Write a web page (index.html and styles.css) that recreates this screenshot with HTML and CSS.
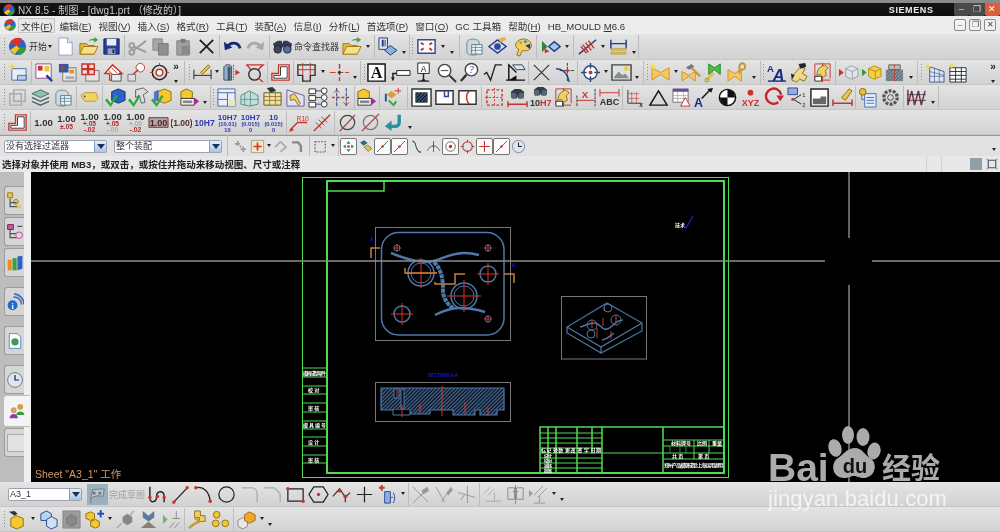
FILE: index.html
```html
<!DOCTYPE html>
<html lang="zh">
<head>
<meta charset="utf-8">
<title>NX 8.5 - 制图</title>
<link rel="stylesheet" href="styles.css">
</head>
<body>
<svg class="defs" xmlns="http://www.w3.org/2000/svg">
<defs>
<pattern id="hatch" width="2.6" height="2.6" patternUnits="userSpaceOnUse" patternTransform="rotate(45)"><rect width="2.6" height="2.6" fill="#101a28"/><rect width="1" height="2.6" fill="#4a6f9a"/></pattern>
<symbol id="start" viewBox="0 0 22 22"><circle cx="11" cy="11" r="9" fill="#2a62c8"/><path d="M3 8a9 9 0 0 1 13-5l-4 7z" fill="#d8322a"/><path d="M11 20a9 9 0 0 0 9-8h-8z" fill="#3a9a3a"/><path d="M3 15l7-5 3 3-5 6z" fill="#f5c518"/></symbol>
<symbol id="new" viewBox="0 0 22 22"><path d="M4 2h9l5 5v13H4z" fill="#fff" stroke="#8ea4cc"/><path d="M13 2v5h5" fill="#dfe6f3" stroke="#8ea4cc"/></symbol>
<symbol id="open" viewBox="0 0 22 22"><path d="M2 8h7l2 2h6v9H2z" fill="#e5b93a" stroke="#a07c18"/><path d="M2 19l4-8h15l-4 8z" fill="#f7e08a" stroke="#a07c18"/><path d="M11 6a5 4 0 0 1 6-3V1l4 3-4 3V5a4 3 0 0 0-6 1z" fill="#3fa43f"/></symbol>
<symbol id="save" viewBox="0 0 22 22"><path d="M3 3h16v16H3z" fill="#24409a" stroke="#16265e"/><path d="M6 3h10v7H6z" fill="#e8edf8"/><path d="M7 13h8v6H7z" fill="#9aa5c0"/><path d="M12 14h2v4h-2z" fill="#16265e"/></symbol>
<symbol id="cut" viewBox="0 0 22 22"><g fill="none" stroke="#9a9a9a" stroke-width="2"><circle cx="5" cy="17" r="2.5"/><circle cx="5" cy="10" r="2.5"/><path d="M7 15L20 5M7 11l13 6"/></g></symbol>
<symbol id="copy" viewBox="0 0 22 22"><path d="M3 3h10v12H3z" fill="#a6a6a6" stroke="#8a8a8a"/><path d="M9 8h10v12H9z" fill="#8f8f8f" stroke="#777"/></symbol>
<symbol id="paste" viewBox="0 0 22 22"><path d="M4 5h13v15H4z" fill="#a0a0a0" stroke="#808080"/><path d="M8 3h5v4H8z" fill="#777"/><path d="M9 10h9v9H9z" fill="#8a8a8a"/></symbol>
<symbol id="x" viewBox="0 0 22 22"><path d="M4 4l14 14M18 4L4 18" stroke="#222" stroke-width="2"/></symbol>
<symbol id="undo" viewBox="0 0 22 22"><path d="M6 11c3-5 11-5 13 2" fill="none" stroke="#132a7a" stroke-width="3"/><path d="M2 6l1 9 8-3z" fill="#132a7a"/></symbol>
<symbol id="redo" viewBox="0 0 22 22"><path d="M16 11c-3-5-11-5-13 2" fill="none" stroke="#a8a8a8" stroke-width="3"/><path d="M20 6l-1 9-8-3z" fill="#a8a8a8"/></symbol>
<symbol id="binoc" viewBox="0 0 22 22"><path d="M1 8l5-3h4l1 3 1-3h4l5 3-1 5h-7l-1-2-2 2H3z" fill="#333c4c"/><circle cx="6" cy="14" r="4" fill="#445" stroke="#223"/><circle cx="16" cy="14" r="4" fill="#5570a8" stroke="#223"/></symbol>
<symbol id="lay" viewBox="0 0 22 22"><path d="M2 2h9v12H2z" fill="#dfe6f3" stroke="#223a7a"/><path d="M5 4h2v7H5zM8 4h1v7H8z" fill="#223a7a"/><path d="M8 15l6-5 7 5-7 5z" fill="#8fb0de" stroke="#223a7a"/></symbol>
<symbol id="fit" viewBox="0 0 22 22"><path d="M2 4h18v14H2z" fill="#fff" stroke="#2a4a9a" stroke-width="1.5"/><path d="M5 7l3 2M17 7l-3 2M5 15l3-2M17 15l-3-2" stroke="#c8342c" stroke-width="2"/></symbol>
<symbol id="dbg" viewBox="0 0 22 22"><path d="M3 7c0-5 13-5 13 0v10c0 4-13 4-13 0z" fill="#cfd8dc" stroke="#6a8a9a"/><path d="M8 9h11v10H8z" fill="#eef3f5" stroke="#5a7f95"/><path d="M8 12h11M8 15h11M12 9v10" stroke="#5a7f95" stroke-width=".8"/></symbol>
<symbol id="eyed" viewBox="0 0 22 22"><path d="M2 11l9-7 9 7-9 7z" fill="#d8e2f5" stroke="#223a8a" stroke-width="1.5"/><circle cx="11" cy="11" r="3.5" fill="#2a4a9a"/><path d="M12 3l7-2 1 3-6 3z" fill="#e8b04a"/></symbol>
<symbol id="pal" viewBox="0 0 22 22"><path d="M3 8c3-7 14-6 16 0 2 6-6 9-9 7l-3 6-3-1 2-6c-2-1-4-3-3-6z" fill="#f0d060" stroke="#8a7020"/><circle cx="8" cy="7" r="1.5" fill="#d83"/><circle cx="13" cy="6" r="1.5" fill="#38c"/><path d="M13 10l5-2v6z" fill="#223a8a"/></symbol>
<symbol id="tri" viewBox="0 0 22 22"><path d="M2 5v12l6-6z" fill="#2a8a3a"/><path d="M5 13v5l5-2z" fill="#c8342c"/><path d="M9 11l6-5 6 5-6 5z" fill="#a8c4ea" stroke="#223a8a" stroke-width="1.5"/></symbol>
<symbol id="hatchd" viewBox="0 0 22 22"><path d="M2 19L20 4" stroke="#223a8a" stroke-width="1.5"/><path d="M6 9l6 8M9 7l6 8M12 5l6 8M4 11l6 7" stroke="#c8342c" stroke-width="1.5"/></symbol>
<symbol id="dimbar" viewBox="0 0 22 22"><path d="M3 4v9M19 4v9M3 8h16" stroke="#223a8a" stroke-width="1.5" fill="none"/><path d="M3 13h16v2H3zM3 17h16v2H3z" fill="#e0c040" stroke="#a89020" stroke-width=".5"/></symbol>
<symbol id="nsheet" viewBox="0 0 22 22"><path d="M5 7h15v12H5z" fill="#e4eefa" stroke="#4a6fa8"/><path d="M11 14h9v5h-9z" fill="#b8cce8" stroke="#4a6fa8"/><path d="M5 1l1 3 3 1-3 1-1 3-1-3-3-1 3-1z" fill="#f5d83a"/></symbol>
<symbol id="vmag" viewBox="0 0 22 22"><path d="M2 2h16v15H2z" fill="#fff" stroke="#8a4a9a"/><path d="M4 4h5v5H4z" fill="#c8342c"/><path d="M11 4h5v6h-5z" fill="#e8c840"/><path d="M13 14l6 6" stroke="#223a8a" stroke-width="2.5"/></symbol>
<symbol id="views" viewBox="0 0 22 22"><path d="M6 6h14v14H6z" fill="#e8e8e8" stroke="#777"/><path d="M2 2h10v9H2z" fill="#2a5ab0"/><path d="M4 4h4v4H4z" fill="#c8342c"/><path d="M13 8h5v4h-5z" fill="#e89020"/><path d="M9 15h9v3H9z" fill="#aaa"/></symbol>
<symbol id="grid3" viewBox="0 0 22 22"><path d="M6 9h14v11H6z" fill="#e4e4e4" stroke="#777"/><g fill="#f4dcdc" stroke="#c8342c" stroke-width="1.5"><path d="M2 2h6v5H2zM9 2h6v5H9zM2 8h6v5H2zM9 8h6v5H9z"/></g></symbol>
<symbol id="cubr" viewBox="0 0 22 22"><path d="M2 12l8-9 10 9-3 0v7H7v-7z" fill="#fff" stroke="#c8342c" stroke-width="1.5"/><path d="M6 9l6 6M9 6l6 6" stroke="#c8342c"/><path d="M9 13h10v7H9z" fill="#e8e8e8" stroke="#555"/></symbol>
<symbol id="link" viewBox="0 0 22 22"><circle cx="15" cy="6" r="4.5" fill="#fff" stroke="#c8342c"/><path d="M4 16l9-8" stroke="#c8342c" stroke-width="1.5"/><path d="M2 13h8v7H2z" fill="#ddd" stroke="#777"/></symbol>
<symbol id="tgt" viewBox="0 0 22 22"><circle cx="11" cy="11" r="7.5" fill="none" stroke="#222" stroke-width="1.5"/><circle cx="11" cy="11" r="3.5" fill="#fff" stroke="#c8342c" stroke-width="1.5"/><path d="M1 11h3M18 11h3M11 1v3" stroke="#c8342c"/></symbol>
<symbol id="dimt" viewBox="0 0 22 22"><path d="M2 8v10M20 8v10M2 14h18" stroke="#222" fill="none"/><path d="M9 11l8-8 2 2-8 8z" fill="#e8c840" stroke="#8a7020"/></symbol>
<symbol id="mir" viewBox="0 0 22 22"><path d="M3 5c3-4 8-2 8 0v14H3z" fill="#8fb0c8" stroke="#456"/><path d="M7 5h3v14H7z" fill="#456"/><path d="M13 3v16" stroke="#c8342c" stroke-dasharray="2 1"/><path d="M15 8l5 3-5 3z" fill="#c8342c"/></symbol>
<symbol id="ring" viewBox="0 0 22 22"><path d="M2 3l18 0-6 6M8 9L3 3" fill="none" stroke="#c8342c" stroke-width="1.5"/><circle cx="11" cy="13" r="6" fill="none" stroke="#333" stroke-width="1.5"/><path d="M15 17l5 4" stroke="#c8342c" stroke-width="1.5"/></symbol>
<symbol id="step" viewBox="0 0 22 22"><path d="M9 3h11v16H2v-7h7z" fill="#fff" stroke="#c8342c" stroke-width="1.5"/><path d="M11 5h7v12H4v-3h7z" fill="none" stroke="#333"/></symbol>
<symbol id="steps" viewBox="0 0 22 22"><path d="M2 3h18v11h-5v6H7v-6H2z" fill="none" stroke="#333" stroke-width="1.5"/><path d="M7 1v12M15 1v12M2 8h18" stroke="#c8342c"/></symbol>
<symbol id="crs" viewBox="0 0 22 22"><path d="M1 11h20" stroke="#c8342c" stroke-dasharray="6 2"/><path d="M11 2v18" stroke="#c8342c" stroke-width="1.5" stroke-dasharray="5 2"/><circle cx="11" cy="11" r="1.5" fill="#333"/></symbol>
<symbol id="abox" viewBox="0 0 22 22"><path d="M1 2h18v18H1z" fill="#fff" stroke="#111" stroke-width="1.5"/><text x="10" y="17" text-anchor="middle" font-family="Liberation Serif" font-weight="700" font-size="17" fill="#111">A</text></symbol>
<symbol id="flag" viewBox="0 0 22 22"><path d="M7 9h14v5H7z" fill="#fff" stroke="#222"/><path d="M7 12H3v7" fill="none" stroke="#222" stroke-width="1.5"/><path d="M1 16l2 4 2-4z" fill="#222"/></symbol>
<symbol id="anno" viewBox="0 0 22 22"><path d="M5 1h12v11H5z" fill="#fff" stroke="#222"/><text x="11" y="10" text-anchor="middle" font-family="Liberation Sans" font-size="9" fill="#222">A</text><path d="M11 12v6M5 20h12" stroke="#222" stroke-width="1.5"/><path d="M8 20l3-3 3 3z" fill="#222"/></symbol>
<symbol id="mag" viewBox="0 0 22 22"><circle cx="9" cy="9" r="6.5" fill="#fff" stroke="#444" stroke-width="1.5"/><path d="M5 9h8" stroke="#444"/><path d="M14 14l7 7" stroke="#333" stroke-width="2"/></symbol>
<symbol id="magq" viewBox="0 0 22 22"><circle cx="13" cy="8" r="6.5" fill="#fff" stroke="#444" stroke-width="1.5"/><text x="13" y="12" text-anchor="middle" font-family="Liberation Serif" font-style="italic" font-size="10" fill="#223a8a">?</text><path d="M8 13l-6 7" stroke="#333" stroke-width="2.5"/></symbol>
<symbol id="sqrt" viewBox="0 0 22 22"><path d="M2 13l3-2 4 8 5-16h7" fill="none" stroke="#222" stroke-width="1.5"/></symbol>
<symbol id="weld" viewBox="0 0 22 22"><path d="M1 19h20M4 19V3l8 8" fill="none" stroke="#111" stroke-width="1.5"/><path d="M4 19l8-5v5z" fill="#111"/><path d="M8 3h10l3 5H12z" fill="#dfe6f3" stroke="#345"/></symbol>
<symbol id="xx" viewBox="0 0 22 22"><path d="M3 3l16 16M19 3L3 19" stroke="#333" stroke-width="1.2"/></symbol>
<symbol id="cvx" viewBox="0 0 22 22"><path d="M2 7c7 0 12 5 14 14" fill="none" stroke="#2a4a9a" stroke-width="1.5"/><path d="M14 1v20M6 9h16" stroke="#333" stroke-dasharray="3 1"/><circle cx="14" cy="9" r="1.5" fill="#c8342c"/></symbol>
<symbol id="chr" viewBox="0 0 22 22"><circle cx="11" cy="11" r="7" fill="#fff" stroke="#2a4a7a" stroke-width="1.5"/><circle cx="11" cy="11" r="2" fill="#c8342c"/><path d="M1 11h6M15 11h6M11 1v6M11 15v6" stroke="#2a4a7a" stroke-width="1.5"/></symbol>
<symbol id="pic" viewBox="0 0 22 22"><path d="M1 3h20v16H1z" fill="#dde2e6" stroke="#444" stroke-width="1.5"/><path d="M3 16l5-6 4 4 3-2 4 5H3z" fill="#8a9088"/><circle cx="16" cy="7" r="2.5" fill="#f0d040"/></symbol>
<symbol id="bow" viewBox="0 0 22 22"><path d="M2 6l9 5 9-5v13l-9-6-9 6z" fill="#f5c860" stroke="#d89020"/><path d="M3 1l1 3 3 1-3 1-1 3-1-3-3-1 3-1z" fill="#f5e040"/></symbol>
<symbol id="bowh" viewBox="0 0 22 22"><path d="M1 10l7 4 7-4v10l-7-5-7 5z" fill="#f5c860" stroke="#d89020"/><path d="M5 6l6-4 3 3-5 3z" fill="#777"/><path d="M11 6l9 9" stroke="#c89848" stroke-width="2.5"/></symbol>
<symbol id="bowg" viewBox="0 0 22 22"><path d="M5 2l6 4 6-4v11l-6-5-6 5z" fill="#48c048" stroke="#208820"/><path d="M10 11l-7 8" stroke="#e0c040" stroke-width="3"/><circle cx="3" cy="19" r="2" fill="none" stroke="#a89020"/></symbol>
<symbol id="bowk" viewBox="0 0 22 22"><path d="M1 8l7 4 7-4v12l-7-5-7 5z" fill="#f5c860" stroke="#d89020"/><path d="M13 12V5c0-5 6-5 6 0 0 3-4 4-6 2" fill="none" stroke="#c89838" stroke-width="2"/></symbol>
<symbol id="aa" viewBox="0 0 22 22"><text x="1" y="10" font-family="Liberation Sans" font-weight="700" font-size="10" fill="#1a2a8a">A</text><text x="7" y="20" font-family="Liberation Sans" font-weight="700" font-size="17" font-style="italic" fill="#1a2a8a">A</text><path d="M2 20h19" stroke="#1a2a8a" stroke-width="1.5"/></symbol>
<symbol id="wren" viewBox="0 0 22 22"><path d="M4 14l8-9 5 2-3 5 5 3-3 5-5-2-3 3-5-2z" fill="#f0d888" stroke="#8a7020"/><path d="M10 2l7-1 1 4-6 2zM2 12l4 2-3 4z" fill="#223"/></symbol>
<symbol id="fry" viewBox="0 0 22 22"><path d="M3 2h16M3 2v17M19 2v15M3 19h16M11 1v20" stroke="#c8342c" fill="none"/><path d="M8 6l5-3 4 3-3 3 1 5-4 2-2-3-4 1 1-5z" fill="#f0d060" stroke="#8a7020"/><path d="M3 15h7v5H3z" fill="#fff" stroke="#333"/></symbol>
<symbol id="cgr" viewBox="0 0 22 22"><path d="M1 7v8l5-4z" fill="#c8342c"/><path d="M8 7l6-3 7 3v8l-7 3-6-3z" fill="#dfe6ea" stroke="#99a"/><path d="M8 7l7 3 6-3M15 10v8" stroke="#99a" fill="none"/></symbol>
<symbol id="cyl" viewBox="0 0 22 22"><path d="M1 7v8l5-4z" fill="#30a030"/><path d="M8 7l6-3 7 3v8l-7 3-6-3z" fill="#f5d040" stroke="#b09018"/><path d="M8 7l7 3 6-3M15 10v8" stroke="#b09018" fill="none"/></symbol>
<symbol id="hatt" viewBox="0 0 22 22"><path d="M5 3h12v5H5z" fill="#bbb" stroke="#665"/><path d="M2 8h18v12H2z" fill="url(#hatch)" opacity=".55"/><path d="M11 3v17" stroke="#c8342c" stroke-dasharray="3 1"/></symbol>
<symbol id="stg" viewBox="0 0 22 22"><path d="M6 5l15 5v11H6z" fill="#dfe6f3" stroke="#4a5a8a"/><path d="M6 10l15 4M6 15h15M11 6v15M16 8v13" stroke="#4a5a8a" stroke-width=".7"/><path d="M4 1l1 3 3 1-3 1-1 3-1-3-3-1 3-1z" fill="#f5d83a"/></symbol>
<symbol id="stt" viewBox="0 0 22 22"><path d="M3 6h17v15H3z" fill="#fff" stroke="#234"/><path d="M3 10h17M3 14h17M3 18h17M9 6v15M15 6v15" stroke="#234"/><path d="M5 0l1 3 3 1-3 1-1 3-1-3-3-1 3-1z" fill="#f5d83a"/></symbol>
<symbol id="gbox" viewBox="0 0 22 22"><path d="M3 7h12v12H3zM7 3h12v12H7z" fill="none" stroke="#aaa" stroke-width="1.5"/></symbol>
<symbol id="stk" viewBox="0 0 22 22"><path d="M2 7l9-4 9 4-9 4z" fill="#8cc0b0" stroke="#4a6a6a"/><path d="M2 11l9 4 9-4M2 15l9 4 9-4" fill="none" stroke="#4a6a6a" stroke-width="1.5"/></symbol>
<symbol id="tag" viewBox="0 0 22 22"><path d="M2 9l4-3h12l2 6-3 3H6z" fill="#f0d468" stroke="#b89a38"/><circle cx="6" cy="10" r="1" fill="#555"/></symbol>
<symbol id="cblue" viewBox="0 0 22 22"><path d="M7 5l7-3 7 3v9l-7 3-7-3z" fill="#2a62c8" stroke="#16306a"/><path d="M2 12l4 5 5-9 2 2-7 11-6-7z" fill="#2fa83f"/></symbol>
<symbol id="hamc" viewBox="0 0 22 22"><path d="M8 3l8-2 5 4-5 3 2 8-4 1-2-8-4 2z" fill="#ddd" stroke="#566"/><path d="M2 12l4 5 5-9 2 2-7 11-6-7z" fill="#2fa83f"/></symbol>
<symbol id="cyc" viewBox="0 0 22 22"><path d="M7 5l7-3 7 3v9l-7 3-7-3z" fill="#f5c830" stroke="#907010"/><path d="M3 5l5-2v11l-5 2z" fill="#2a62c8" opacity=".8"/><path d="M2 12l4 5 5-9 2 2-7 11-6-7z" fill="#2fa83f"/></symbol>
<symbol id="dmc" viewBox="0 0 22 22"><path d="M2 5l6-3 6 3v6l-6 3-6-3z" fill="#f5c830" stroke="#907010"/><path d="M2 12h14v7H2z" fill="#fff" stroke="#333"/><path d="M4 14h10v3H4z" fill="#888"/><path d="M16 11l5 4-5 4z" fill="#b020a0"/></symbol>
<symbol id="win" viewBox="0 0 22 22"><path d="M2 2h18v18H2z" fill="#eef" stroke="#4a6a9a"/><path d="M2 6h18M12 6v14M2 13h10" stroke="#4a6a9a"/><path d="M13 13h7v7h-7z" fill="#e8e8c0"/></symbol>
<symbol id="dbm" viewBox="0 0 22 22"><path d="M2 9l9-5 9 5v9l-9 2-9-2z" fill="#bfe0d8" stroke="#5a8a8a"/><path d="M2 13h18M6 7v12M12 5v15" stroke="#5a8a8a" stroke-width=".8"/></symbol>
<symbol id="tby" viewBox="0 0 22 22"><path d="M2 6h18v13H2z" fill="#f4e290" stroke="#555"/><path d="M2 10h18M2 14h18M8 6v13M14 6v13" stroke="#7a6a30" stroke-width=".8"/><path d="M5 1l6-1 4 4-6 2z" fill="#333"/></symbol>
<symbol id="tl2" viewBox="0 0 22 22"><path d="M2 3l18 6v11H2z" fill="#dfe4f4" stroke="#6a5a9a"/><path d="M5 9l5-2 2 3 4 7-2 2-4-6-4 1z" fill="#f0d060" stroke="#8a7020"/></symbol>
<symbol id="tre" viewBox="0 0 22 22"><g fill="#fff" stroke="#333"><path d="M1 2h7v5H1zM1 9h7v5H1zM1 16h7v5H1z"/><circle cx="17" cy="4" r="3"/><circle cx="17" cy="11" r="3"/><circle cx="17" cy="18" r="3"/></g><path d="M8 4h6M8 11h6M8 18h6" stroke="#2a4a9a"/></symbol>
<symbol id="dts" viewBox="0 0 22 22"><path d="M6 1v20M16 1v20" stroke="#223a7a" stroke-dasharray="4 1"/><path d="M1 11h20" stroke="#c8342c" stroke-dasharray="3 2" stroke-width="1.5"/><path d="M3 6l3-3 3 3M13 16l3 3 3-3" fill="none" stroke="#c8342c"/></symbol>
<symbol id="axs" viewBox="0 0 22 22"><path d="M5 8l5-4 5 4-5 4z" fill="#d8a030"/><path d="M7 14l5 5 3-4" fill="none" stroke="#2fa83f" stroke-width="2"/><path d="M4 7v8" stroke="#2a4a9a" stroke-width="2"/><path d="M13 4h7M17 1v6" stroke="#c8342c"/></symbol>
<symbol id="hbx" viewBox="0 0 22 22"><path d="M1 2h20v18H1z" fill="#fff" stroke="#333" stroke-width="1.5"/><path d="M5 6h12v10H5z" fill="url(#hatch)" stroke="#444"/></symbol>
<symbol id="nc1" viewBox="0 0 22 22"><path d="M2 4h18v14H2z" fill="#fff" stroke="#333" stroke-width="1.5"/><path d="M11 4v6h4V4" fill="none" stroke="#2a4a9a" stroke-width="1.5"/></symbol>
<symbol id="nc2" viewBox="0 0 22 22"><path d="M2 4h18v14H2z" fill="#fff" stroke="#333" stroke-width="1.5"/><path d="M13 4c-4 3-4 10 0 14" fill="none" stroke="#c8342c" stroke-width="1.5"/></symbol>
<symbol id="rsq" viewBox="0 0 22 22"><path d="M3 3h16v16H3z" fill="none" stroke="#c8342c" stroke-width="1.5" stroke-dasharray="3 2"/><path d="M11 1v20M1 11h20" stroke="#c8342c" stroke-dasharray="2 2"/></symbol>
<symbol id="bnd" viewBox="0 0 22 22"><path d="M4 5l4-3h6l4 3-1 7h-5l-1-2-1 2H5z" fill="#333c4c"/><circle cx="7" cy="9" r="3" fill="#567"/><circle cx="15" cy="9" r="3" fill="#567"/><path d="M1 15v6M21 15v6M1 18h20" stroke="#c8342c" stroke-width="1.5"/></symbol>
<symbol id="b10" viewBox="0 0 22 22"><path d="M4 3l4-3h6l4 3-1 6h-5l-1-2-1 2H5z" fill="#333c4c"/><circle cx="7" cy="6" r="3" fill="#567"/><circle cx="15" cy="6" r="3" fill="#567"/><text x="0" y="20" font-family="Liberation Sans" font-weight="700" font-size="9.5" fill="#333">10<tspan fill="#c8342c">H7</tspan></text></symbol>
<symbol id="xd" viewBox="0 0 22 22"><path d="M1 9v11M20 2v18" stroke="#333" stroke-dasharray="3 1"/><path d="M1 14h19" stroke="#c8342c"/><text x="6" y="11" font-family="Liberation Sans" font-weight="700" font-size="10" fill="#c8342c">X</text></symbol>
<symbol id="abc" viewBox="0 0 22 22"><path d="M1 2v8M21 2v8M1 6h20" stroke="#c8342c"/><text x="11" y="19" text-anchor="middle" font-family="Liberation Sans" font-weight="700" font-size="9.5" fill="#333">ABC</text></symbol>
<symbol id="xya" viewBox="0 0 22 22"><path d="M3 3v14h14" fill="none" stroke="#333"/><path d="M3 7h12M3 12h12M7 5v12M12 5v12" stroke="#c8342c" stroke-width=".6"/><text x="15" y="21" font-family="Liberation Sans" font-weight="700" font-size="7" fill="#333">x</text></symbol>
<symbol id="tria" viewBox="0 0 22 22"><path d="M11 4l9 15H2z" fill="none" stroke="#111" stroke-width="1.5"/></symbol>
<symbol id="tbw" viewBox="0 0 22 22"><path d="M2 2h16v14H2z" fill="#fff" stroke="#777"/><path d="M2 2h16v3H2z" fill="#6a4aa8"/><path d="M2 9h16M2 12h16M7 5v11M13 5v11" stroke="#999" stroke-width=".7"/><path d="M15 11l5 9H10z" fill="#fff" stroke="#c8342c"/></symbol>
<symbol id="aar" viewBox="0 0 22 22"><text x="0" y="21" font-family="Liberation Sans" font-weight="700" font-size="13" fill="#1a2a8a">A</text><path d="M8 12l9-9" stroke="#111" stroke-width="1.5"/><path d="M20 1l-6 1 4 4z" fill="#111"/></symbol>
<symbol id="ball" viewBox="0 0 22 22"><circle cx="11" cy="11" r="8.5" fill="#fff" stroke="#111" stroke-width="1.5"/><path d="M11 3a8 8 0 0 1 8 8h-8zM11 19a8 8 0 0 1-8-8h8z" fill="#111"/></symbol>
<symbol id="xyz" viewBox="0 0 22 22"><circle cx="11" cy="6" r="3" fill="#c8342c"/><text x="11" y="20" text-anchor="middle" font-family="Liberation Sans" font-weight="700" font-size="9.5" fill="#c8342c">XYZ</text></symbol>
<symbol id="rrn" viewBox="0 0 22 22"><path d="M16 16a8 8 0 1 1 3-8" fill="none" stroke="#c8242c" stroke-width="2.5"/><path d="M14 9h8l-4 6z" fill="#c8242c"/></symbol>
<symbol id="t12" viewBox="0 0 22 22"><path d="M2 1h10v7H2z" fill="#9aa8e0" stroke="#334a9a"/><path d="M8 13l8-5M8 13l8 5" stroke="#222"/><circle cx="7" cy="13" r="1.5" fill="#c8342c"/><text x="17" y="10" font-family="Liberation Sans" font-size="6" fill="#222">1</text><text x="17" y="21" font-family="Liberation Sans" font-size="6" fill="#222">2</text></symbol>
<symbol id="blk" viewBox="0 0 22 22"><path d="M2 2h18v18H2z" fill="#fff" stroke="#222" stroke-width="1.5"/><path d="M4 12h8v-2h6v8H4z" fill="#666"/></symbol>
<symbol id="brs" viewBox="0 0 22 22"><path d="M10 11l8-9 3 2-7 10z" fill="#e8c840" stroke="#8a7020"/><path d="M1 13v7M21 13v7M1 17h20" stroke="#c8342c" stroke-width="1.5"/></symbol>
<symbol id="sch" viewBox="0 0 22 22"><path d="M8 7h12v14H8z" fill="#e4eefa" stroke="#4a6fa8"/><path d="M10 11h8M10 14h8M10 17h8" stroke="#4a6fa8"/><circle cx="6" cy="5" r="3.5" fill="#e8c040" stroke="#906a10"/><path d="M8 13H5v-5" fill="none" stroke="#4a6fa8"/></symbol>
<symbol id="gr" viewBox="0 0 22 22"><circle cx="11" cy="11" r="3" fill="none" stroke="#444"/><circle cx="11" cy="11" r="7" fill="none" stroke="#555" stroke-width="3.5" stroke-dasharray="3 1.4"/></symbol>
<symbol id="zig" viewBox="0 0 22 22"><path d="M2 3v16l4-15 3 15 4-15 3 15 4-15" fill="none" stroke="#7a2a3a" stroke-width="1.5"/><path d="M1 8h20M1 14h20" stroke="#335" stroke-width=".8"/></symbol>
<symbol id="d100" viewBox="0 0 22 22"><text x="11" y="15" text-anchor="middle" font-family="Liberation Sans" font-weight="700" font-size="10" fill="#333">1.00</text></symbol>
<symbol id="d101" viewBox="0 0 22 22"><text x="11" y="10" text-anchor="middle" font-family="Liberation Sans" font-weight="700" font-size="10" fill="#333">1.00</text><text x="11" y="18" text-anchor="middle" font-family="Liberation Sans" font-weight="700" font-size="7" fill="#b02a2a">±.05</text></symbol>
<symbol id="d102" viewBox="0 0 22 22"><text x="11" y="8" text-anchor="middle" font-family="Liberation Sans" font-weight="700" font-size="10" fill="#333">1.00</text><text x="11" y="14.500" text-anchor="middle" font-family="Liberation Sans" font-weight="700" font-size="7" fill="#b02a2a">+.05</text><text x="11" y="21" text-anchor="middle" font-family="Liberation Sans" font-weight="700" font-size="7" fill="#b02a2a">-.02</text></symbol>
<symbol id="d103" viewBox="0 0 22 22"><text x="11" y="8" text-anchor="middle" font-family="Liberation Sans" font-weight="700" font-size="10" fill="#333">1.00</text><text x="11" y="14.500" text-anchor="middle" font-family="Liberation Sans" font-weight="700" font-size="7" fill="#b02a2a">+.05</text><text x="11" y="21" text-anchor="middle" font-family="Liberation Sans" font-weight="700" font-size="7" fill="#aaa">-.00</text></symbol>
<symbol id="d104" viewBox="0 0 22 22"><text x="11" y="8" text-anchor="middle" font-family="Liberation Sans" font-weight="700" font-size="10" fill="#333">1.00</text><text x="11" y="14.500" text-anchor="middle" font-family="Liberation Sans" font-weight="700" font-size="7" fill="#aaa">+.00</text><text x="11" y="21" text-anchor="middle" font-family="Liberation Sans" font-weight="700" font-size="7" fill="#b02a2a">-.02</text></symbol>
<symbol id="d105" viewBox="0 0 22 22"><path d="M1 6h20v10H1z" fill="#aaa" stroke="#7a2a2a"/><text x="11" y="15" text-anchor="middle" font-family="Liberation Sans" font-weight="700" font-size="9.500" fill="#5a1a1a">1.00</text></symbol>
<symbol id="d106" viewBox="0 0 22 22"><text x="11" y="15" text-anchor="middle" font-family="Liberation Sans" font-weight="700" font-size="9" fill="#5a2a2a">(1.00)</text></symbol>
<symbol id="h71" viewBox="0 0 22 22"><text x="11" y="15" text-anchor="middle" font-family="Liberation Sans" font-weight="700" font-size="9" fill="#2a3ab0">10H7</text></symbol>
<symbol id="h72" viewBox="0 0 22 22"><text x="11" y="8" text-anchor="middle" font-family="Liberation Sans" font-weight="700" font-size="8.500" fill="#2a3ab0">10H7</text><text x="11" y="14.500" text-anchor="middle" font-family="Liberation Sans" font-weight="700" font-size="6" fill="#2a3ab0">(10.01)</text><text x="11" y="21" text-anchor="middle" font-family="Liberation Sans" font-weight="700" font-size="6" fill="#2a3ab0">10</text></symbol>
<symbol id="h73" viewBox="0 0 22 22"><text x="11" y="8" text-anchor="middle" font-family="Liberation Sans" font-weight="700" font-size="8.500" fill="#2a3ab0">10H7</text><text x="11" y="14.500" text-anchor="middle" font-family="Liberation Sans" font-weight="700" font-size="6" fill="#2a3ab0">(0.015)</text><text x="11" y="21" text-anchor="middle" font-family="Liberation Sans" font-weight="700" font-size="6" fill="#2a3ab0">0</text></symbol>
<symbol id="h74" viewBox="0 0 22 22"><text x="11" y="8" text-anchor="middle" font-family="Liberation Sans" font-weight="700" font-size="8.500" fill="#2a3ab0">10</text><text x="11" y="14.500" text-anchor="middle" font-family="Liberation Sans" font-weight="700" font-size="6" fill="#2a3ab0">(0.015)</text><text x="11" y="21" text-anchor="middle" font-family="Liberation Sans" font-weight="700" font-size="6" fill="#2a3ab0">0</text></symbol>
<symbol id="rld" viewBox="0 0 22 22"><path d="M2 19l8-8h10" fill="none" stroke="#c8342c" stroke-width="1.5"/><path d="M1 21l3-5 2 3z" fill="#c8342c"/><text x="9" y="9" font-family="Liberation Sans" font-size="7" fill="#c8342c">R10</text></symbol>
<symbol id="rl2" viewBox="0 0 22 22"><path d="M3 20L20 3" stroke="#c8342c" stroke-width="1.5"/><path d="M5 11l6 6M8 8l6 6M11 5l6 6" stroke="#c8342c"/></symbol>
<symbol id="dia" viewBox="0 0 22 22"><circle cx="11" cy="11" r="7.5" fill="none" stroke="#444" stroke-width="1.3"/><path d="M3 20L19 3" stroke="#a83a3a" stroke-width="1.3"/></symbol>
<symbol id="dib" viewBox="0 0 22 22"><circle cx="11" cy="11" r="7.5" fill="none" stroke="#777" stroke-width="1.3"/><path d="M2 20L20 2" stroke="#a83a3a" stroke-width="1.3"/></symbol>
<symbol id="ret" viewBox="0 0 22 22"><path d="M17 3v8a4 4 0 0 1-4 4H6" fill="none" stroke="#2a90a0" stroke-width="3.5"/><path d="M9 9l-7 6 7 5z" fill="#2a90a0"/></symbol>
<symbol id="f1" viewBox="0 0 22 22"><path d="M3 7h7M7 3v7M11 15h8M15 11v8M10 10l2 2" stroke="#999" stroke-width="2.5"/></symbol>
<symbol id="f2" viewBox="0 0 22 22"><path d="M2 2h18v18H2z" fill="#f0e8c0" stroke="#888"/><path d="M11 5v12M5 11h12" stroke="#d8342c" stroke-width="2.5"/></symbol>
<symbol id="f3" viewBox="0 0 22 22"><path d="M3 12l8-8M11 4l8 8-8 7" fill="none" stroke="#aaa" stroke-width="2.5"/></symbol>
<symbol id="f4" viewBox="0 0 22 22"><path d="M3 5h9l4 5v9" fill="none" stroke="#888" stroke-width="3.5"/></symbol>
<symbol id="f5" viewBox="0 0 22 22"><path d="M3 4h15v15H3z" fill="none" stroke="#555" stroke-width="1.5" stroke-dasharray="2.5 2"/></symbol>
<symbol id="f6" viewBox="0 0 22 22"><g fill="#2a8a4a"><path d="M11 3l3 4H8zM11 19l-3-4h6zM3 11l4-3v6zM19 11l-4 3V8z"/></g><circle cx="11" cy="11" r="2" fill="#c8342c"/></symbol>
<symbol id="f7" viewBox="0 0 22 22"><path d="M3 5l6-3 5 4-6 4z" fill="#2a6a8a"/><path d="M9 12l5-3 6 5-5 4z" fill="#e8c840" stroke="#555"/></symbol>
<symbol id="ln" viewBox="0 0 22 22"><path d="M3 19L19 3" stroke="#222"/><circle cx="11" cy="11" r="1.8" fill="#c8342c"/></symbol>
<symbol id="tcv" viewBox="0 0 22 22"><path d="M5 3c8 2 2 12 11 16" fill="none" stroke="#2a4a5a" stroke-width="1.5"/><circle cx="16" cy="19" r="1.5" fill="#c8342c"/></symbol>
<symbol id="tin" viewBox="0 0 22 22"><path d="M2 17c4-9 14-9 18 0M11 3v16" fill="none" stroke="#333"/><circle cx="11" cy="10" r="1.5" fill="#c8342c"/></symbol>
<symbol id="cct" viewBox="0 0 22 22"><circle cx="11" cy="11" r="7" fill="#fff" stroke="#333"/><circle cx="11" cy="11" r="2.5" fill="#c8342c"/></symbol>
<symbol id="cdi" viewBox="0 0 22 22"><circle cx="11" cy="11" r="7" fill="none" stroke="#c8342c" stroke-width="1.5"/><path d="M11 1v4M11 17v4M1 11h4M17 11h4" stroke="#333"/></symbol>
<symbol id="pls" viewBox="0 0 22 22"><path d="M11 3v16M3 11h16" stroke="#c8342c" stroke-width="1.5"/></symbol>
<symbol id="chk" viewBox="0 0 22 22"><path d="M0 0h22v22H0z" fill="#9ab0bc"/><path d="M4 15l2-9 12-1-1 8c-4-1-8-1-11 1z" fill="#c0c8cc" stroke="#6a7a84"/><path d="M6 8h3v3H6zM12 8h3v3h-3z" fill="#6a7a84"/><path d="M4 15v5" stroke="#6a7a84"/></symbol>
<symbol id="scv" viewBox="0 0 22 22"><path d="M3 3v12c0 5 7 5 7-2 0-6 8-7 8 0v6" fill="none" stroke="#222" stroke-width="1.5"/><circle cx="3" cy="14" r="1.8" fill="#c8342c"/><circle cx="11" cy="13" r="1.8" fill="#c8342c"/><circle cx="18" cy="14" r="1.8" fill="#c8342c"/></symbol>
<symbol id="sln" viewBox="0 0 22 22"><path d="M4 19L18 4" stroke="#222" stroke-width="1.3"/><circle cx="4" cy="19" r="1.8" fill="#c8342c"/><circle cx="18" cy="4" r="1.8" fill="#c8342c"/></symbol>
<symbol id="arc" viewBox="0 0 22 22"><path d="M3 4c8-2 14 4 15 14" fill="none" stroke="#222" stroke-width="1.3"/><circle cx="3" cy="4" r="1.8" fill="#c8342c"/><circle cx="18" cy="18" r="1.8" fill="#c8342c"/></symbol>
<symbol id="cir" viewBox="0 0 22 22"><circle cx="11" cy="11" r="8" fill="none" stroke="#222" stroke-width="1.3"/></symbol>
<symbol id="fi1" viewBox="0 0 22 22"><path d="M3 4h10c4 0 6 3 6 6v9" fill="none" stroke="#aaa" stroke-width="1.3"/></symbol>
<symbol id="fi2" viewBox="0 0 22 22"><path d="M2 4h11l6 6v9" fill="none" stroke="#aaa" stroke-width="1.3"/></symbol>
<symbol id="rct" viewBox="0 0 22 22"><path d="M3 5h16v13H3z" fill="none" stroke="#222" stroke-width="1.3"/><circle cx="3" cy="5" r="1.8" fill="#c8342c"/><circle cx="19" cy="18" r="1.8" fill="#c8342c"/></symbol>
<symbol id="hex" viewBox="0 0 22 22"><path d="M6 3h10l5 8-5 8H6l-5-8z" fill="none" stroke="#222" stroke-width="1.3"/><circle cx="11" cy="11" r="1.8" fill="#c8342c"/></symbol>
<symbol id="zgz" viewBox="0 0 22 22"><path d="M2 13l7-8 6 9 5-5M9 5v3M15 14v5" fill="none" stroke="#333" stroke-width="1.3"/><circle cx="9" cy="7" r="2" fill="#c8342c"/><circle cx="15" cy="13" r="2" fill="#c8342c"/></symbol>
<symbol id="plb" viewBox="0 0 22 22"><path d="M11 3v16M3 11h16" stroke="#222" stroke-width="1.3"/></symbol>
<symbol id="prn" viewBox="0 0 22 22"><path d="M8 8h6v12H8z" fill="#8fb0de" stroke="#2a4a9a"/><path d="M17 9c2 3 2 8 0 11" fill="none" stroke="#2a4a9a"/><path d="M14 14h3" stroke="#c8342c"/><path d="M5 1v6M2 4h6" stroke="#c8342c" stroke-width="2"/></symbol>
<symbol id="tr1" viewBox="0 0 22 22"><path d="M3 3l16 16M3 20L18 5" stroke="#999"/><path d="M12 7l6-4 2 4-6 4z" fill="#999"/></symbol>
<symbol id="tr2" viewBox="0 0 22 22"><path d="M3 3l9 16M19 3L9 19" stroke="#999"/><path d="M14 9l5-5 2 2-5 6z" fill="#999"/></symbol>
<symbol id="tr3" viewBox="0 0 22 22"><path d="M2 9l18 5M12 2v18" stroke="#999"/><path d="M5 17l4-6" stroke="#999"/></symbol>
<symbol id="pr1" viewBox="0 0 22 22"><path d="M2 10l7-7M6 12l7-7M4 18h16M13 9v9" stroke="#aaa"/></symbol>
<symbol id="pr2" viewBox="0 0 22 22"><path d="M3 4h7v12H3zM12 4h7v12h-7z" fill="none" stroke="#888"/><path d="M11 1v20M8 8h6" stroke="#888"/></symbol>
<symbol id="pr3" viewBox="0 0 22 22"><path d="M1 6v8l4-4z" fill="#7ab07a"/><path d="M6 12l10-10M10 14l10-10M6 20h12M12 12v8" stroke="#999"/></symbol>
<symbol id="cq" viewBox="0 0 22 22"><path d="M4 10l6-3 7 3v8l-7 3-6-3z" fill="#f5c830" stroke="#907010"/><path d="M2 3l6-1 3 3-3 2z" fill="#333"/></symbol>
<symbol id="bcb" viewBox="0 0 22 22"><path d="M3 5l6-3 5 3v7H3z" fill="#b8d4f0" stroke="#2a4a8a"/><path d="M9 11l5-3 6 3v7l-6 3-5-3z" fill="#cfe2f5" stroke="#2a4a8a"/></symbol>
<symbol id="gsq" viewBox="0 0 22 22"><path d="M2 2h18v18H2z" fill="#9a9a9a" stroke="#888"/><path d="M6 9l5-3 5 3v6l-5 3-5-3z" fill="#888" stroke="#777"/></symbol>
<symbol id="cbs" viewBox="0 0 22 22"><path d="M2 5l5-2 4 2v5l-4 2-5-2zM7 13l5-2 4 2v5l-4 2-5-2z" fill="#f5c830" stroke="#907010"/><path d="M14 5h7M17.500 1v8" stroke="#2a4ac0" stroke-width="2"/></symbol>
<symbol id="gcb" viewBox="0 0 22 22"><path d="M8 8l5-3 5 3v6l-5 3-5-3z" fill="#888"/><path d="M2 20l5-5M15 7l5-5" stroke="#aaa" stroke-width="1.5"/></symbol>
<symbol id="gbw" viewBox="0 0 22 22"><path d="M5 2l6 5 6-5v7l-6 4-6-4z" fill="#5a7aa0"/><path d="M3 20l8-7v7zM11 13l8 7h-8z" fill="#8a8070"/></symbol>
<symbol id="gtg" viewBox="0 0 22 22"><path d="M2 6v10l5-5z" fill="#7ab07a"/><path d="M12 10h8M16 2v8M9 20l5-6M14 20l5-6" stroke="#888"/></symbol>
<symbol id="ykb" viewBox="0 0 22 22"><path d="M8 2h6v5h5v6h-6v-4H8z" fill="#f0d060" stroke="#8a7020"/><path d="M8 9l5 4-6 3-5 4" fill="none" stroke="#c89838" stroke-width="2.5"/></symbol>
<symbol id="yks" viewBox="0 0 22 22"><g fill="#f5c830" stroke="#907010"><circle cx="7" cy="6" r="3.500"/><circle cx="6" cy="15" r="3.500"/><circle cx="16" cy="15" r="3.500"/></g></symbol>
<symbol id="gyc" viewBox="0 0 22 22"><path d="M2 12l5-3 5 3v6l-5 3-5-3z" fill="#e8e8e8" stroke="#888"/><path d="M9 6l5-3 6 3v6l-6 3-5-3z" fill="#f0a830" stroke="#a06a10"/></symbol>
<symbol id="s1" viewBox="0 0 22 22"><g fill="#f0c838" stroke="#8a7020"><path d="M2 1h6v6H2zM12 9a3 3 0 1 0 .1 0z"/></g><path d="M5 8v10h9M5 13h8" stroke="#555" fill="none" stroke-width="1.5"/><circle cx="16" cy="18" r="2.5" fill="#f0c838"/></symbol>
<symbol id="s2" viewBox="0 0 22 22"><path d="M2 2h7v6H2z" fill="#c060a0" stroke="#703"/><path d="M5 9v9h8M5 13h8M14 4h6" stroke="#555" fill="none" stroke-width="1.5"/><circle cx="16" cy="15" r="4" fill="#f0d0e0" stroke="#a04080"/></symbol>
<symbol id="s3" viewBox="0 0 22 22"><path d="M2 7h5v13H2z" fill="#f08a20"/><path d="M8 5h5v15H8z" fill="#3aa03a"/><path d="M14 3l6-1v16l-6 2z" fill="#2a62c8"/></symbol>
<symbol id="s4" viewBox="0 0 22 22"><circle cx="8" cy="15" r="6" fill="#1e6ac8"/><text x="8" y="19" text-anchor="middle" font-family="Liberation Serif" font-weight="700" font-size="10" fill="#fff">i</text><path d="M9 5a9 9 0 0 1 10 9M10 1a13 13 0 0 1 12 13" fill="none" stroke="#3a6ac0" stroke-width="2"/></symbol>
<symbol id="s5" viewBox="0 0 22 22"><path d="M4 2h10l4 4v14H4z" fill="#fff" stroke="#4a7ab0"/><circle cx="11" cy="12" r="4.500" fill="#3a9a5a"/></symbol>
<symbol id="s6" viewBox="0 0 22 22"><circle cx="11" cy="11" r="9" fill="#dfe6f3" stroke="#667"/><path d="M11 5v6h5" fill="none" stroke="#223" stroke-width="1.5"/></symbol>
<symbol id="s7" viewBox="0 0 22 22"><circle cx="15" cy="6" r="3.500" fill="#d8a040"/><path d="M10 16c0-6 10-6 10 0z" fill="#3a9a3a"/><circle cx="7" cy="10" r="3.500" fill="#d89a70"/><path d="M2 20c0-7 10-7 10 0z" fill="#8a3aa8"/></symbol>
</defs>
</svg>

<div class="app">
  <header class="titlebar">
    <svg class="tlogo"><use href="#start"/></svg>
    <span class="ttext">NX 8.5 - 制图 - [dwg1.prt （修改的）]</span>
    <span class="siemens">SIEMENS</span>
    <span class="wbtn">&#8211;</span><span class="wbtn">&#10064;</span><span class="wbtn close">&#10005;</span>
  </header>

  <nav class="menubar">
    <svg class="mlogo"><use href="#start"/></svg>
    <span class="mi on">文件(<u>F</u>)</span><span class="mi">编辑(<u>E</u>)</span><span class="mi">视图(<u>V</u>)</span><span class="mi">插入(<u>S</u>)</span><span class="mi">格式(<u>R</u>)</span><span class="mi">工具(<u>T</u>)</span><span class="mi">装配(<u>A</u>)</span><span class="mi">信息(<u>I</u>)</span><span class="mi">分析(<u>L</u>)</span><span class="mi">首选项(<u>P</u>)</span><span class="mi">窗口(<u>O</u>)</span><span class="mi">GC 工具箱</span><span class="mi">帮助(<u>H</u>)</span><span class="mi">HB_MOULD <u>M</u>6.6</span>
    <span class="mbtns"><span class="mb">&#8211;</span><span class="mb">&#10064;</span><span class="mb">&#10005;</span></span>
  </nav>

  <div class="tb tall">
    <b class="grip"></b><svg class="i"><use href="#start"/></svg><span class="lbl w18">开始</span><b class="dd s"></b><b class="gap w1"></b>
    <svg class="i"><use href="#new"/></svg><svg class="i"><use href="#open"/></svg><svg class="i"><use href="#save"/></svg><b class="sep w3"></b>
    <svg class="i"><use href="#cut"/></svg><svg class="i"><use href="#copy"/></svg><svg class="i"><use href="#paste"/></svg><svg class="i"><use href="#x"/></svg><b class="sep w3"></b>
    <svg class="i"><use href="#undo"/></svg><svg class="i"><use href="#redo"/></svg><b class="sep w4"></b>
    <svg class="i"><use href="#binoc"/></svg><span class="lbl w45">命令查找器</span><svg class="i"><use href="#open"/></svg><b class="dd"></b><b class="sep w3"></b>
    <svg class="i"><use href="#lay"/></svg><b class="dd low"></b><b class="sep w2"></b><b class="grip"></b>
    <svg class="i"><use href="#fit"/></svg><b class="dd"></b><b class="dd n low"></b><b class="sep w7"></b>
    <svg class="i"><use href="#dbg"/></svg><svg class="i"><use href="#eyed"/></svg><b class="gap w3"></b><svg class="i"><use href="#pal"/></svg><b class="sep w4"></b>
    <svg class="i"><use href="#tri"/></svg><b class="dd"></b><b class="sep w4"></b>
    <svg class="i"><use href="#hatchd"/></svg><b class="dd n"></b><svg class="i"><use href="#dimbar"/></svg><b class="dd n low"></b><b class="sep w2"></b>
  </div>

  <div class="tb">
    <b class="grip"></b><svg class="i"><use href="#nsheet"/></svg><b class="sep w4"></b>
    <svg class="i"><use href="#vmag"/></svg><svg class="i"><use href="#views"/></svg><svg class="i"><use href="#grid3"/></svg><svg class="i"><use href="#cubr"/></svg><svg class="i"><use href="#link"/></svg><svg class="i"><use href="#tgt"/></svg><b class="more"></b><b class="sep w6"></b><b class="grip"></b>
    <svg class="i"><use href="#dimt"/></svg><b class="dd s"></b><svg class="i"><use href="#mir"/></svg><svg class="i"><use href="#ring"/></svg><b class="sep w3"></b>
    <svg class="i"><use href="#step"/></svg><b class="sep w3"></b>
    <svg class="i"><use href="#steps"/></svg><b class="dd"></b><svg class="i"><use href="#crs"/></svg><b class="dd n low"></b><b class="sep w3"></b><b class="grip"></b>
    <svg class="i"><use href="#abox"/></svg><svg class="i"><use href="#flag"/></svg><svg class="i"><use href="#anno"/></svg><svg class="i"><use href="#mag"/></svg><svg class="i"><use href="#magq"/></svg><svg class="i"><use href="#sqrt"/></svg><svg class="i"><use href="#weld"/></svg><b class="sep w3"></b>
    <svg class="i"><use href="#xx"/></svg><svg class="i"><use href="#cvx"/></svg><b class="sep w3"></b>
    <svg class="i"><use href="#chr"/></svg><b class="dd n"></b><svg class="i"><use href="#pic"/></svg><b class="dd n low"></b><b class="sep w4"></b><b class="grip"></b>
    <svg class="i"><use href="#bow"/></svg><b class="dd n"></b><svg class="i"><use href="#bowh"/></svg><svg class="i"><use href="#bowg"/></svg><svg class="i"><use href="#bowk"/></svg><b class="dd low"></b><b class="sep w2"></b><b class="grip"></b>
    <svg class="i"><use href="#aa"/></svg><svg class="i"><use href="#wren"/></svg><svg class="i"><use href="#fry"/></svg><b class="sep w3"></b>
    <svg class="i"><use href="#cgr"/></svg><svg class="i"><use href="#cyl"/></svg><svg class="i"><use href="#hatt"/></svg><b class="dd low"></b><b class="sep w3"></b><b class="grip"></b>
    <svg class="i"><use href="#stg"/></svg><svg class="i"><use href="#stt"/></svg><b class="more end"></b>
  </div>

  <div class="tb">
    <b class="grip"></b><svg class="i"><use href="#gbox"/></svg><svg class="i"><use href="#stk"/></svg><svg class="i"><use href="#dbg"/></svg><b class="sep w3"></b>
    <svg class="i"><use href="#tag"/></svg><b class="sep w3"></b>
    <svg class="i"><use href="#cblue"/></svg><svg class="i"><use href="#hamc"/></svg><svg class="i"><use href="#cyc"/></svg><b class="gap w5"></b><svg class="i"><use href="#dmc"/></svg><b class="dd n low"></b><b class="sep w2"></b><b class="grip"></b>
    <svg class="i"><use href="#win"/></svg><svg class="i"><use href="#dbm"/></svg><svg class="i"><use href="#tby"/></svg><svg class="i"><use href="#tl2"/></svg><svg class="i"><use href="#tre"/></svg><svg class="i"><use href="#dts"/></svg><b class="sep w2"></b>
    <svg class="i"><use href="#dmc"/></svg><b class="sep w3"></b>
    <svg class="i"><use href="#axs"/></svg><b class="sep w6"></b>
    <svg class="i"><use href="#hbx"/></svg><svg class="i"><use href="#nc1"/></svg><svg class="i"><use href="#nc2"/></svg><b class="sep w4"></b>
    <svg class="i"><use href="#rsq"/></svg><svg class="i"><use href="#bnd"/></svg><svg class="i"><use href="#b10"/></svg><svg class="i"><use href="#fry"/></svg><svg class="i"><use href="#xd"/></svg><svg class="i"><use href="#abc"/></svg><b class="sep w3"></b>
    <svg class="i"><use href="#xya"/></svg><svg class="i"><use href="#tria"/></svg><svg class="i"><use href="#tbw"/></svg><svg class="i"><use href="#aar"/></svg><svg class="i"><use href="#ball"/></svg><svg class="i"><use href="#xyz"/></svg><svg class="i"><use href="#rrn"/></svg><svg class="i"><use href="#t12"/></svg><svg class="i"><use href="#blk"/></svg><svg class="i"><use href="#brs"/></svg><b class="sep w2"></b>
    <svg class="i"><use href="#sch"/></svg><svg class="i"><use href="#gr"/></svg><b class="sep w3"></b>
    <svg class="i"><use href="#zig"/></svg><b class="dd low"></b><b class="sep w1"></b>
  </div>

  <div class="tb">
    <b class="grip"></b><svg class="i"><use href="#step"/></svg><b class="sep w3"></b>
    <svg class="i"><use href="#d100"/></svg><svg class="i"><use href="#d101"/></svg><svg class="i"><use href="#d102"/></svg><svg class="i"><use href="#d103"/></svg><svg class="i"><use href="#d104"/></svg><svg class="i"><use href="#d105"/></svg><svg class="i"><use href="#d106"/></svg><svg class="i"><use href="#h71"/></svg><svg class="i"><use href="#h72"/></svg><svg class="i"><use href="#h73"/></svg><svg class="i"><use href="#h74"/></svg><b class="sep w2"></b>
    <svg class="i"><use href="#rld"/></svg><svg class="i"><use href="#rl2"/></svg><b class="sep w3"></b>
    <svg class="i"><use href="#dia"/></svg><svg class="i"><use href="#dib"/></svg><svg class="i"><use href="#ret"/></svg><b class="dd low"></b>
  </div>

  <div class="filterbar">
    <span class="combo wa">没有选择过滤器<b class="cbtn"></b></span>
    <span class="combo wb">整个装配<b class="cbtn"></b></span>
    <b class="sep w10"></b>
    <svg class="m"><use href="#f1"/></svg><svg class="m"><use href="#f2"/></svg><b class="dd s"></b><svg class="m"><use href="#f3"/></svg><svg class="m"><use href="#f4"/></svg><b class="sep w6"></b>
    <svg class="m"><use href="#f5"/></svg><b class="dd n"></b><b class="sep w3"></b>
    <svg class="m boxed"><use href="#f6"/></svg><svg class="m"><use href="#f7"/></svg><svg class="m boxed"><use href="#ln"/></svg><svg class="m boxed"><use href="#ln"/></svg><svg class="m"><use href="#tcv"/></svg><svg class="m"><use href="#tin"/></svg><svg class="m boxed"><use href="#cct"/></svg><svg class="m"><use href="#cdi"/></svg><svg class="m boxed"><use href="#pls"/></svg><svg class="m boxed"><use href="#ln"/></svg><svg class="m"><use href="#s6"/></svg>
    <b class="dd low push"></b>
  </div>

  <div class="statusbar">
    <span class="stext">选择对象并使用 MB3，或双击，或按住并拖动来移动视图、尺寸或注释</span>
    <span class="scell"></span><span class="scell"></span>
    <b class="stile"></b>
    <svg class="sfull" viewBox="0 0 16 16"><path d="M3 3h10v10H3z" fill="none" stroke="#456" stroke-width="1.5"/><path d="M1 1l3 3M15 1l-3 3M1 15l3-3M15 15l-3-3" stroke="#456"/></svg>
  </div>

  <main class="work">
    <aside class="rail">
      <span class="tab"><svg class="ti"><use href="#s1"/></svg></span>
      <span class="tab"><svg class="ti"><use href="#s2"/></svg></span>
      <span class="tab"><svg class="ti"><use href="#s3"/></svg></span>
      <span class="tab gapt"><svg class="ti"><use href="#s4"/></svg></span>
      <span class="tab gapt"><svg class="ti"><use href="#s5"/></svg></span>
      <span class="tab gapt"><svg class="ti"><use href="#s6"/></svg></span>
      <span class="tab active"><svg class="ti"><use href="#s7"/></svg></span>
      <span class="tab blank"><b class="blankbox"></b></span>
    </aside>
    <svg class="sheet" viewBox="31 172 969 310" xmlns="http://www.w3.org/2000/svg">
      <g fill="none" stroke="#50dc50">
        <rect x="302.500" y="177.500" width="426" height="300"/>
        <rect x="327" y="181" width="397" height="292" stroke-width="2"/>
        <path d="M327 191h57v-10" stroke-width="1.500"/>
        <path d="M302 368h25M302 377h25M302 386h25M302 394h25M302 403h25M302 412h25M302 421h25M302 429h25M302 437h25M302 446h25M302 455h25M302 463h25"/>
        <path d="M540 473v-46h184M548 427v46M556 427v46M577 427v46M592 427v26M602 427v46M663 427v46" stroke-width="1.500"/>
        <path d="M540 433h62M540 438h62M540 443h62M540 448h62M540 453h184M540 458h62M540 463h62M540 468h62"/>
        <path d="M663 440h61M663 446h61M663 459h61M694 440v19M709 440v14"/>
        <path d="M670 446v8M680 446v8M686 446v8" stroke="#2d8a2d"/>
      </g>
      <g class="cad" fill="#fff">
        <text x="303" y="375" textLength="23">模具成型零件</text>
        <text x="308" y="392">校 对</text>
        <text x="308" y="410">审 核</text>
        <text x="303" y="427" textLength="23">模具编号</text>
        <text x="308" y="444">设 计</text>
        <text x="308" y="462">审 核</text>
        <text x="541" y="452" textLength="60">标记 处数 更改 签 字 日期</text>
        <text class="tiny" x="544" y="457.500">设计</text><text class="tiny" x="544" y="462.500">校对</text><text class="tiny" x="544" y="467.500">审核</text><text class="tiny" x="544" y="472.500">批准</text>
        <text x="671" y="445" textLength="20">材料牌号</text><text x="697" y="445">比例</text><text x="712" y="445">重量</text>
        <text x="672" y="458">共 页</text><text x="698" y="458">第 页</text>
        <text x="664" y="467" textLength="59">郑州产品模塑成型:上海:运用说明</text>
        <text x="675" y="227">技术</text>
      </g>
      <path d="M684 226l2 2 7-12" fill="none" stroke="#1a2ac0" stroke-width="1.200"/>
      <text class="cad blue" x="428" y="377" textLength="30">SECTION A-A</text>
      <text class="cad blue" x="370" y="241">A</text>
      <text class="cad blue" x="512" y="267">A</text>

      <g fill="none" stroke="#777">
        <rect x="375.500" y="227.500" width="135" height="113"/>
        <rect x="561.500" y="296.500" width="85" height="62.500"/>
        <rect x="375.500" y="382.500" width="135" height="39"/>
      </g>

      <g fill="none" stroke="#4d78a8">
        <rect x="381.500" y="232.500" width="122.500" height="102.500" rx="17" stroke-width="1.500"/>
        <circle cx="421" cy="273" r="13" stroke-width="1.500"/><circle cx="421" cy="273" r="10"/>
        <circle cx="464" cy="296" r="13" stroke-width="1.500"/><circle cx="464" cy="296" r="10"/>
        <circle cx="488" cy="274" r="8" stroke-width="1.500"/><circle cx="402" cy="314" r="8" stroke-width="1.500"/>
        <circle cx="397" cy="248" r="3"/><circle cx="488" cy="248" r="3"/><circle cx="488" cy="319" r="3"/>
        <path d="M391 253c10 4 22 9 36 9 12 0 20-9 38-9 6 0 10 1 14 2" stroke-width="2.500"/>
        <path d="M434 262c8 8 9 18 9 28 0 8 4 14 10 18" stroke-width="4" stroke-dasharray="4 .8"/>
        <path d="M435 315c8-4 16-7 24-7 10 0 20 2 26 4" stroke-width="2.500"/>
      </g>
      <g fill="none" stroke="#d8342c">
        <path d="M405 273h32M421 258v30M447 296h34M464 280v32M477 274h22M488 263v22M391 314h22M402 303v22M393 248h8M397 244v8M484 248h8M488 244v8M484 319h8M488 315v8"/>
      </g>
      <g fill="none" stroke="#c8803a" stroke-width="1.500">
        <path d="M371 258v-10h9M405 268v5h32M435 282v2h20v-10h10M504 274h10v9"/>
      </g>

      <g fill="none" stroke="#4d78a8">
        <path d="M607 303l35 20v8l-41 22-34-20v-6zM567 327l34 20 41-24M601 347v6" stroke-width="1.200"/>
        <circle cx="608" cy="308" r="4"/><circle cx="616" cy="320" r="5"/><circle cx="592" cy="325" r="5"/><circle cx="591" cy="334" r="4"/>
        <path d="M580 327c6-2 10-4 14-4 8 0 8 12 18 3 4-4 8-6 11-6M602 340c6-1 8-4 12-7" stroke-width="1.500"/>
      </g>
      <path d="M604 307v4M616 315v8M592 320v8M597 328v10M611 331v8M603 318v8" stroke="#d8342c"/>

      <path d="M381 388H504V410H497V415H480V410H475V415H453V410H430V414H410V410H381Z" fill="url(#hatch)" stroke="#4d78a8" stroke-width="1.200"/>
      <path d="M393 410v5h17v-5" fill="#000" stroke="#4d78a8"/>
      <path d="M394 389h5v9h-5zM401 389h3v19h-3z" fill="#0b1018" stroke="#4d78a8"/>
      <path d="M397 390v8M442 386v30M465 402v12M402 405v12M420 404v10M488 408v8" stroke="#d8342c"/>

      <path d="M31 261h794M872 261h128M849 172v66M849 285v197" stroke="#8c8c8c" stroke-width="1.400" fill="none"/>
      <text class="sheetname" x="35" y="478">Sheet "A3_1" 工作</text>
    </svg>
  </main>

  <div class="tb low1">
    <span class="combo wc">A3_1<b class="cbtn"></b></span>
    <svg class="i"><use href="#chk"/></svg><span class="lbl w37 dim">完成草图</span>
    <svg class="i"><use href="#scv"/></svg><svg class="i"><use href="#sln"/></svg><svg class="i"><use href="#arc"/></svg><svg class="i"><use href="#cir"/></svg><svg class="i"><use href="#fi1"/></svg><svg class="i"><use href="#fi2"/></svg><svg class="i"><use href="#rct"/></svg><svg class="i"><use href="#hex"/></svg><svg class="i"><use href="#zgz"/></svg><svg class="i"><use href="#plb"/></svg><svg class="i"><use href="#prn"/></svg><b class="dd n"></b><b class="sep w2"></b>
    <svg class="i"><use href="#tr1"/></svg><svg class="i"><use href="#tr2"/></svg><svg class="i"><use href="#tr3"/></svg><b class="sep w3"></b>
    <svg class="i"><use href="#pr1"/></svg><svg class="i"><use href="#pr2"/></svg><svg class="i"><use href="#pr3"/></svg><b class="dd n"></b><b class="dd n low"></b>
  </div>
  <div class="tb">
    <b class="grip"></b><svg class="i"><use href="#cq"/></svg><b class="dd n"></b><svg class="i"><use href="#bcb"/></svg><svg class="i"><use href="#gsq"/></svg><svg class="i"><use href="#cbs"/></svg><b class="dd n"></b>
    <svg class="i"><use href="#gcb"/></svg><svg class="i"><use href="#gbw"/></svg><svg class="i"><use href="#gtg"/></svg><b class="sep w3"></b>
    <svg class="i"><use href="#ykb"/></svg><svg class="i"><use href="#yks"/></svg><b class="sep w3"></b>
    <svg class="i"><use href="#gyc"/></svg><b class="dd n"></b><b class="dd n low"></b>
  </div>

  <svg class="watermark" viewBox="0 0 190 90" xmlns="http://www.w3.org/2000/svg">
    <g class="wm-fill">
      <ellipse cx="67" cy="23" rx="6.500" ry="9" transform="rotate(-15 67 23)"/>
      <ellipse cx="80" cy="10" rx="6" ry="9"/>
      <ellipse cx="95" cy="12" rx="6.500" ry="9"/>
      <ellipse cx="106" cy="26" rx="6.500" ry="8.500" transform="rotate(15 106 26)"/>
      <path d="M87 23c7 0 10 7 15 10 8 5 6 19-6 20-5 0-7-2-10-2s-5 2-10 2c-12 0-14-15-6-20 5-3 9-10 17-10z"/>
      <text class="wm-big" x="0" y="56">Bai</text>
      <text class="wm-cn" x="114" y="54">经验</text>
    </g>
    <text class="wm-du" x="87" y="48" text-anchor="middle">du</text>
    <text class="wm-url" x="0" y="81">jingyan.baidu.com</text>
  </svg>
</div>
</body>
</html>
```

FILE: styles.css
```css
* { box-sizing: border-box; }
html, body { margin: 0; padding: 0; height: 100%; overflow: hidden; }
body { font-family: "Liberation Sans", "Noto Sans CJK SC", sans-serif; background: #ddd; }
.defs { position: absolute; width: 0; height: 0; }
.app { position: relative; width: 1000px; height: 532px; overflow: hidden; display: flex; flex-direction: column; filter: blur(.35px); }

.titlebar { height: 16px; flex: none; display: flex; align-items: center; color: #c8c8c8; font-size: 10px;
  background: linear-gradient(#8a8a8a 0, #8a8a8a 3px, #141414 3px, #0e0e0e 100%); padding-top: 3px; }
.tlogo { width: 14px; height: 14px; margin: 0 2px 0 2px; }
.ttext { font-family: "Liberation Sans", "Noto Sans CJK SC", sans-serif; letter-spacing: .1px; }
.siemens { margin-left: auto; margin-right: 20px; color: #eee; font-weight: 700; font-size: 9px; letter-spacing: .6px; }
.wbtn { width: 15.500px; height: 13px; background: #4a4a4a; color: #ddd; font-size: 9px; line-height: 13px; text-align: center; border-radius: 0 0 2px 2px; margin-top: -1px; }
.wbtn.close { background: #d8603c; color: #fff; }

.menubar { height: 18px; flex: none; display: flex; align-items: center; gap: 1px; padding-left: 3px; background: #ececec; color: #333; font-size: 9.600px; }
.mlogo { width: 14px; height: 14px; margin-right: 0; }
.mi { padding: 1px 2px; height: 15px; line-height: 13px; border: 1px solid transparent; white-space: nowrap; }
.mi.on { border-color: #c4c4c4; background: #e6e6e6; }
.mbtns { margin-left: auto; display: flex; gap: 3px; margin-right: 4px; }
.mb { width: 12px; height: 12px; border: 1px solid #888; border-radius: 2px; background: #f2f2f2; font-size: 8px; line-height: 10px; text-align: center; color: #444; }

.tb { height: 25px; flex: none; display: flex; align-items: center; padding-left: 2px; background: linear-gradient(#e4e4e4, #d2d2d2); border-bottom: 1px solid #c6c6c6; overflow: hidden; }
.tb.tall { height: 26px; }
.tb.low1 { padding-left: 8px; }
.i { width: 21px; height: 21px; margin: 0 1px; flex: none; }
.m { width: 15px; height: 15px; margin: 0 1px; flex: none; }
.m.boxed { width: 17px; height: 17px; margin: 0; background: #fafafa; border: 1px solid #777; border-radius: 2px; }
.grip { width: 4px; height: 17px; flex: none; background: repeating-linear-gradient(#8c8c8c 0 1px, transparent 1px 3px) no-repeat center / 1px 100%; }
.sep { flex: none; height: 23px; background: linear-gradient(#bcbcbc, #bcbcbc) no-repeat center / 1px 100%; }
.gap { flex: none; }
.w1 { width: 1px; } .w2 { width: 2px; } .w3 { width: 3px; } .w4 { width: 4px; } .w5 { width: 5px; }
.w6 { width: 6px; } .w7 { width: 7px; } .w10 { width: 10px; }
.dd { flex: none; width: 10px; height: 4px; position: relative; }
.dd::after { content: ""; display: block; width: 0; margin: 0 auto; border: 2.500px solid transparent; border-top: 3px solid #222; border-bottom: 0; }
.dd.n { width: 8px; } .dd.s { width: 6px; }
.dd.low { align-self: flex-end; margin-bottom: 4px; }
.dd.push { margin-left: auto; margin-right: 1px; }
.more { flex: none; width: 10px; height: 21px; display: flex; flex-direction: column; justify-content: space-between; align-items: center; }
.more::before { content: "»"; font: 700 10px/9px "Liberation Sans", sans-serif; color: #222; }
.more::after { content: ""; border: 2.500px solid transparent; border-top: 3px solid #222; border-bottom: 0; }
.more.end { margin-left: auto; margin-right: 2px; }
.lbl { flex: none; font-size: 9px; color: #333; white-space: nowrap; }
.lbl.dim { color: #a0a0a0; }
.w18 { width: 18px; } .w37 { width: 37px; } .w45 { width: 45.500px; }

.filterbar { height: 21px; flex: none; display: flex; align-items: center; padding-left: 4px; gap: 0; background: #e2e2e2; border-top: 1px solid #9a9a9a; }
.combo { flex: none; height: 13px; display: flex; align-items: center; justify-content: space-between; background: #fff; border: 1px solid #9aa4b0; border-radius: 2px; font-size: 9px; line-height: 11px; padding-left: 1px; color: #333; white-space: nowrap; }
.wa { width: 103px; margin-right: 7px; }
.wb { width: 108px; }
.wc { width: 74px; margin-right: 4px; }
.cbtn { width: 12px; height: 11px; flex: none; background: linear-gradient(#e8f0fa, #a8c4e6); border-left: 1px solid #7a9abf; display: flex; align-items: center; justify-content: center; }
.cbtn::after { content: ""; border: 4px solid transparent; border-top: 5px solid #1c2f5a; border-bottom: 0; }

.statusbar { height: 16px; flex: none; display: flex; align-items: center; background: #e8e8e8; font-size: 9.500px; font-weight: 700; color: #222; padding-left: 2px; }
.stext { flex: 1; }
.scell { width: 15px; height: 15px; border-left: 1px solid #cfcfcf; flex: none; }
.stile { width: 12px; height: 12px; flex: none; background: #8fa0a8; margin: 0 4px 0 14px; }
.sfull { width: 12px; height: 12px; flex: none; margin-right: 2px; }

.work { flex: 1; display: flex; min-height: 0; background: #000; }
.rail { width: 31px; flex: none; display: flex; flex-direction: column; padding: 14px 0 0 4px; background: linear-gradient(90deg, #bdbdbd 0 24px, #efefef 24px); gap: 2px; }
.tab { width: 20px; height: 29px; flex: none; display: flex; align-items: center; justify-content: center; background: #d6d6d6; border: 1px solid #9c9c9c; border-right: 0; border-radius: 3px 0 0 3px; }
.gapt { margin-top: 8px; }
.tab.active { width: 27px; height: 32px; margin: -1px 0 -1px -1px; background: #f4f4f4; border-color: #bbb; }
.tab.blank { align-items: center; justify-content: flex-end; }
.blankbox { width: 17px; height: 18px; border: 1px solid #aaa; border-right: 0; background: #e2e2e2; }
.ti { width: 18px; height: 18px; }
.sheet { width: 969px; height: 310px; flex: none; display: block; }
.cad { font-family: "Noto Sans CJK SC", sans-serif; font-size: 5px; font-weight: 700; }
.cad .tiny { font-size: 4px; }
.cad.blue { fill: #1a1ac8; }
.sheetname { font-family: "Liberation Sans", "Noto Sans CJK SC", sans-serif; font-size: 10.500px; fill: #d89a68; }

.watermark { position: absolute; left: 768px; top: 425px; width: 190px; height: 90px; pointer-events: none; }
.wm-fill { fill: #ababab; }
.wm-big { font: 700 39px "Liberation Sans", sans-serif; }
.wm-cn { font: 700 29px "Noto Sans CJK SC", sans-serif; }
.wm-du { font: 700 20px "Liberation Sans", sans-serif; fill: #111; }
.wm-url { font: 400 22px "Liberation Sans", sans-serif; fill: #f4f4f4; letter-spacing: .1px; }
```
